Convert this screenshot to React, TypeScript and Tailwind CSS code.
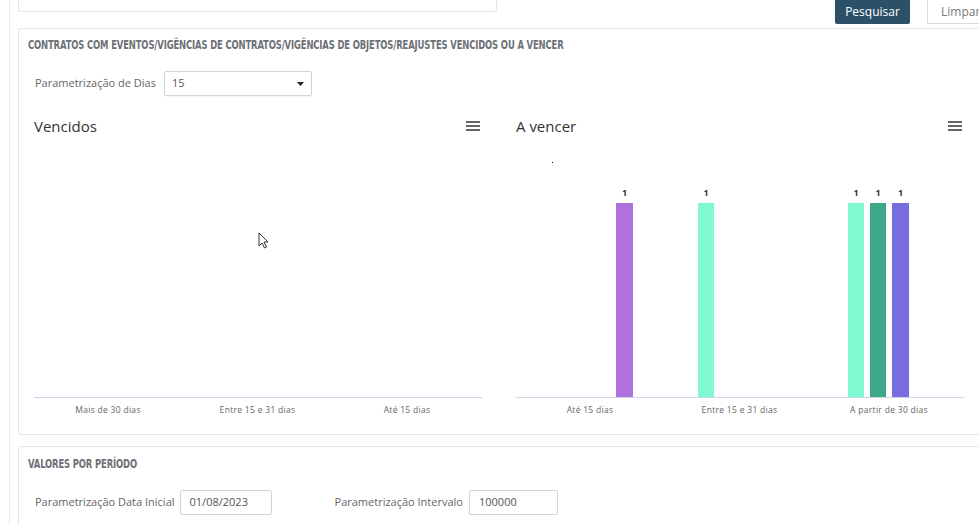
import React from 'react';

const bodyFont = { fontFamily: '"Open Sans", "Liberation Sans", sans-serif' };
const headFont = { fontFamily: '"DejaVu Sans Condensed", "Liberation Sans Narrow", sans-serif' };

interface Bar {
  x: number;
  w: number;
  color: string;
}

const MenuIcon: React.FC = () => (
  <svg width="14" height="12" viewBox="0 0 14 12">
    <rect x="0" y="1" width="14" height="2" fill="#666" />
    <rect x="0" y="5" width="14" height="2" fill="#666" />
    <rect x="0" y="9" width="14" height="2" fill="#666" />
  </svg>
);

const Chart: React.FC<{ title: string; labels: string[]; bars: Bar[]; children?: React.ReactNode }> = ({
  title,
  labels,
  bars,
  children,
}) => (
  <div className="w-[448px] flex flex-col relative">
    <div className="flex items-start justify-between h-[20px]">
      <span className="text-[15px] leading-[20px] text-[#333]" style={bodyFont}>
        {title}
      </span>
      <div className="mt-[4px] mr-[2px]">
        <MenuIcon />
      </div>
    </div>
    <svg width="448" height="280" viewBox="0 0 448 280" className="mt-[4px]">
      {bars.map((b, i) => (
        <g key={i}>
          <rect x={b.x} y={63} width={b.w} height={194} fill={b.color} />
          <text
            x={b.x + b.w / 2}
            y={56}
            textAnchor="middle"
            fontSize="9"
            fontWeight="bold"
            fill="#333"
            style={bodyFont}
          >
            1
          </text>
        </g>
      ))}
      <line x1="0" y1="257.5" x2="448" y2="257.5" stroke="#ccd6eb" strokeWidth="1" />
      {labels.map((l, i) => (
        <text
          key={l}
          x={74 + i * 149.5}
          y={273}
          textAnchor="middle"
          fontSize="8.5"
          letterSpacing="0.3"
          fill="#666"
          style={bodyFont}
        >
          {l}
        </text>
      ))}
    </svg>
    {children}
  </div>
);

const headStyle = { ...headFont, transform: 'scaleX(0.722)', transformOrigin: 'left' };

const App: React.FC = () => {
  return (
    <div className="w-[979px] h-[525px] bg-white overflow-hidden" style={bodyFont}>
      <div className="ml-[9px] h-full border-l border-[#ececec] pl-[8px]">
        {/* top row */}
        <div className="flex items-start h-[28px]">
          <div className="w-[479px] h-[12px] border border-t-0 border-[#e6e6e6] rounded-b-[3px]" />
          <div className="ml-auto flex items-start gap-[17px] mr-[-10px]">
            <button className="w-[75px] h-[24px] bg-[#2b5068] text-white text-[12px] rounded-b-[2px]">
              Pesquisar
            </button>
            <button className="w-[62px] h-[24px] bg-white border border-t-0 border-[#d8d8d8] text-[#777] text-[12px] text-left pl-[13px]">
              Limpar
            </button>
          </div>
        </div>

        {/* main panel */}
        <div className="w-[968px] h-[407px] border border-[#e6e6e6] rounded-[3px] pt-[8px]">
          <h2
            className="ml-[9px] text-[13px] leading-[15px] font-bold text-[#6d7075] tracking-[-0.2px] whitespace-nowrap"
            style={headStyle}
          >
            CONTRATOS COM EVENTOS/VIGÊNCIAS DE CONTRATOS/VIGÊNCIAS DE OBJETOS/REAJUSTES VENCIDOS OU A VENCER
          </h2>
          <div className="flex items-center mt-[19px] ml-[16px]">
            <span className="text-[11px] text-[#666]">Parametrização de Dias</span>
            <div className="ml-[8px] w-[148px] h-[25px] border border-[#d4d4d4] rounded-[2px] flex items-center justify-between px-[7px] shadow-[0_1px_1px_rgba(0,0,0,0.05)]">
              <span className="text-[11px] text-[#555]">15</span>
              <svg width="7" height="4" viewBox="0 0 7 4">
                <path d="M0 0h7L3.5 4z" fill="#222" />
              </svg>
            </div>
          </div>
          <div className="flex gap-[34px] ml-[15px] mt-[20px]">
            <Chart title="Vencidos" labels={['Mais de 30 dias', 'Entre 15 e 31 dias', 'Até 15 dias']} bars={[]}>
              <svg width="12" height="17" viewBox="0 0 12 17" className="absolute left-[224px] top-[116px]">
                <path d="M1 1v13l3-3 2.5 5 2-1-2.5-5H10z" fill="#fff" stroke="#333" strokeWidth="1" />
              </svg>
            </Chart>
            <Chart
              title="A vencer"
              labels={['Até 15 dias', 'Entre 15 e 31 dias', 'A partir de 30 dias']}
              bars={[
                { x: 100, w: 17, color: '#b071dc' },
                { x: 182, w: 16, color: '#80f9d3' },
                { x: 332, w: 16, color: '#80f9d3' },
                { x: 354, w: 16, color: '#3fa88a' },
                { x: 376, w: 17, color: '#776ddc' },
              ]}
            >
              <div className="absolute left-[36px] top-[46px] w-[1px] h-[1px] bg-black" />
            </Chart>
          </div>
        </div>

        {/* second panel */}
        <div className="w-[968px] h-[100px] mt-[11px] border border-[#e6e6e6] rounded-[3px] pt-[9px]">
          <h2
            className="ml-[9px] text-[13px] leading-[15px] font-bold text-[#6d7075] tracking-[-0.2px] whitespace-nowrap"
            style={headStyle}
          >
            VALORES POR PERÍODO
          </h2>
          <div className="flex items-center mt-[19px] ml-[16px]">
            <span className="text-[11px] text-[#666]">Parametrização Data Inicial</span>
            <div className="ml-[5px] w-[92px] h-[25px] border border-[#d4d4d4] rounded-[2px] flex items-center px-[9px]">
              <span className="text-[11px] text-[#555]">01/08/2023</span>
            </div>
            <span className="ml-[63px] text-[11px] text-[#666]">Parametrização Intervalo</span>
            <div className="ml-[6px] w-[89px] h-[25px] border border-[#d4d4d4] rounded-[2px] flex items-center px-[9px]">
              <span className="text-[11px] text-[#555]">100000</span>
            </div>
          </div>
        </div>
      </div>
    </div>
  );
};

export default App;
